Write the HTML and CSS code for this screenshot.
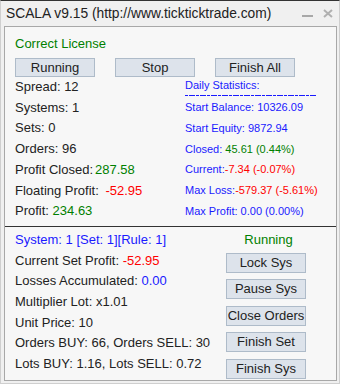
FILE: index.html
```html
<!doctype html>
<html lang="en">
<head>
    <meta charset="UTF-8">
    <title>SCALA</title>
    <link rel="stylesheet" href="styles.css">
</head>
<body>
<div class="window">
    <div class="titlebar">
        <span class="title">SCALA v9.15 (http://www.tickticktrade.com)</span>
        <span class="win-btns">
            <svg class="min" width="11" height="3" viewBox="0 0 11 3"><rect x="0" y="0" width="11" height="2" fill="#a8a8a8"/></svg>
            <svg class="close" width="10" height="9" viewBox="0 0 10 9"><path d="M1 1 L9 8 M9 1 L1 8" stroke="#b0b0b0" stroke-width="2"/></svg>
        </span>
    </div>
    <div class="panel">
        <div class="top">
            <div class="license">Correct License</div>
            <div class="btn-row">
                <a class="btn wide">Running</a>
                <a class="btn wide">Stop</a>
                <a class="btn wide">Finish All</a>
            </div>
            <div class="cols">
                <ul class="stats">
                    <li>Spread: 12</li>
                    <li>Systems: 1</li>
                    <li>Sets: 0</li>
                    <li>Orders: 96</li>
                    <li>Profit Closed:<span class="green gap1">287.58</span></li>
                    <li>Floating Profit: <span class="red gap2">-52.95</span></li>
                    <li>Profit: <span class="green">234.63</span></li>
                </ul>
                <div class="daily">
                    <div class="daily-head">Daily Statistics:</div>
                    <div class="dashes"></div>
                    <ul>
                        <li>Start Balance: 10326.09</li>
                        <li>Start Equity: 9872.94</li>
                        <li>Closed: <span class="green">45.61 (0.44%)</span></li>
                        <li>Current:<span class="red">-7.34 (-0.07%)</span></li>
                        <li>Max Loss:<span class="red">-579.37 (-5.61%)</span></li>
                        <li>Max Profit: 0.00 (0.00%)</li>
                    </ul>
                </div>
            </div>
        </div>
        <div class="bottom">
            <ul class="stats">
                <li class="blue">System: 1 [Set: 1][Rule: 1]</li>
                <li>Current Set Profit: <span class="red">-52.95</span></li>
                <li>Losses Accumulated: <span class="blue">0.00</span></li>
                <li>Multiplier Lot: x1.01</li>
                <li>Unit Price: 10</li>
                <li>Orders BUY: 66, Orders SELL: 30</li>
                <li>Lots BUY: 1.16, Lots SELL: 0.72</li>
            </ul>
            <div class="sys-ctrl">
                <div class="state green">Running</div>
                <a class="btn">Lock Sys</a>
                <a class="btn">Pause Sys</a>
                <a class="btn">Close Orders</a>
                <a class="btn">Finish Set</a>
                <a class="btn">Finish Sys</a>
            </div>
        </div>
    </div>
</div>
</body>
</html>
```

FILE: styles.css
```css
* {
    margin: 0;
    padding: 0;
}

body {
    font-family: "Liberation Sans", Arial, sans-serif;
    font-size: 13px;
    color: #222;
}

ul {
    list-style: none;
}

.window {
    width: 340px;
    height: 384px;
    box-sizing: border-box;
    border: 1px solid #cfcfcf;
    border-top-color: #333;
    background: #f0f0f0;
    display: flex;
    flex-direction: column;
}

.titlebar {
    height: 25px;
    display: flex;
    align-items: center;
    justify-content: space-between;
    padding-left: 5px;
}

.title {
    font-size: 13.8px;
    color: #222;
}

.win-btns {
    display: flex;
    align-items: center;
    gap: 10px;
    padding-right: 6px;
}

.win-btns .min {
    margin-top: 6px;
}

.panel {
    flex: 1;
    margin: 0 2px 2px 3px;
    border: 1px solid #a8a8a8;
    background: #f7f7f7;
    padding-left: 10px;
}

.license {
    color: #008000;
    line-height: 18px;
    margin-top: 8px;
}

.btn-row {
    display: flex;
    gap: 20px;
    margin-top: 5px;
}

.btn {
    display: block;
    box-sizing: border-box;
    width: 80px;
    height: 20px;
    line-height: 18px;
    text-align: center;
    background: #dde3eb;
    border: 1px solid #aebbc9;
    color: #222;
    white-space: nowrap;
}

.btn.wide {
    height: 19px;
    line-height: 17px;
}

.cols {
    display: flex;
}

.stats li {
    line-height: 20.7px;
    white-space: nowrap;
}

.cols .stats {
    width: 170px;
}

.gap1 {
    margin-left: 2px;
}

.gap2 {
    margin-left: 3px;
}

.daily {
    font-size: 11px;
    color: #1a1aff;
}

.daily-head {
    line-height: 16px;
}

.dashes {
    width: 132px;
    height: 1px;
    margin: 2px 0 1px;
    background: repeating-linear-gradient(90deg, #1a1aff 0 3px, transparent 3px 3.67px);
}

.daily li {
    line-height: 20.8px;
    white-space: nowrap;
}

.bottom {
    display: flex;
    justify-content: space-between;
    margin-left: -10px;
    padding-left: 10px;
    margin-top: 4px;
    padding-top: 3px;
    border-top: 1px solid #333;
}

.sys-ctrl {
    width: 80px;
    margin-right: 30px;
    display: flex;
    flex-direction: column;
    gap: 6.5px;
}

.state {
    line-height: 20px;
    text-align: center;
    padding-left: 5px;
    margin-bottom: -3.5px;
}

.green {
    color: #008000;
}

.red {
    color: #ff0000;
}

.blue {
    color: #1a1aff;
}
```
